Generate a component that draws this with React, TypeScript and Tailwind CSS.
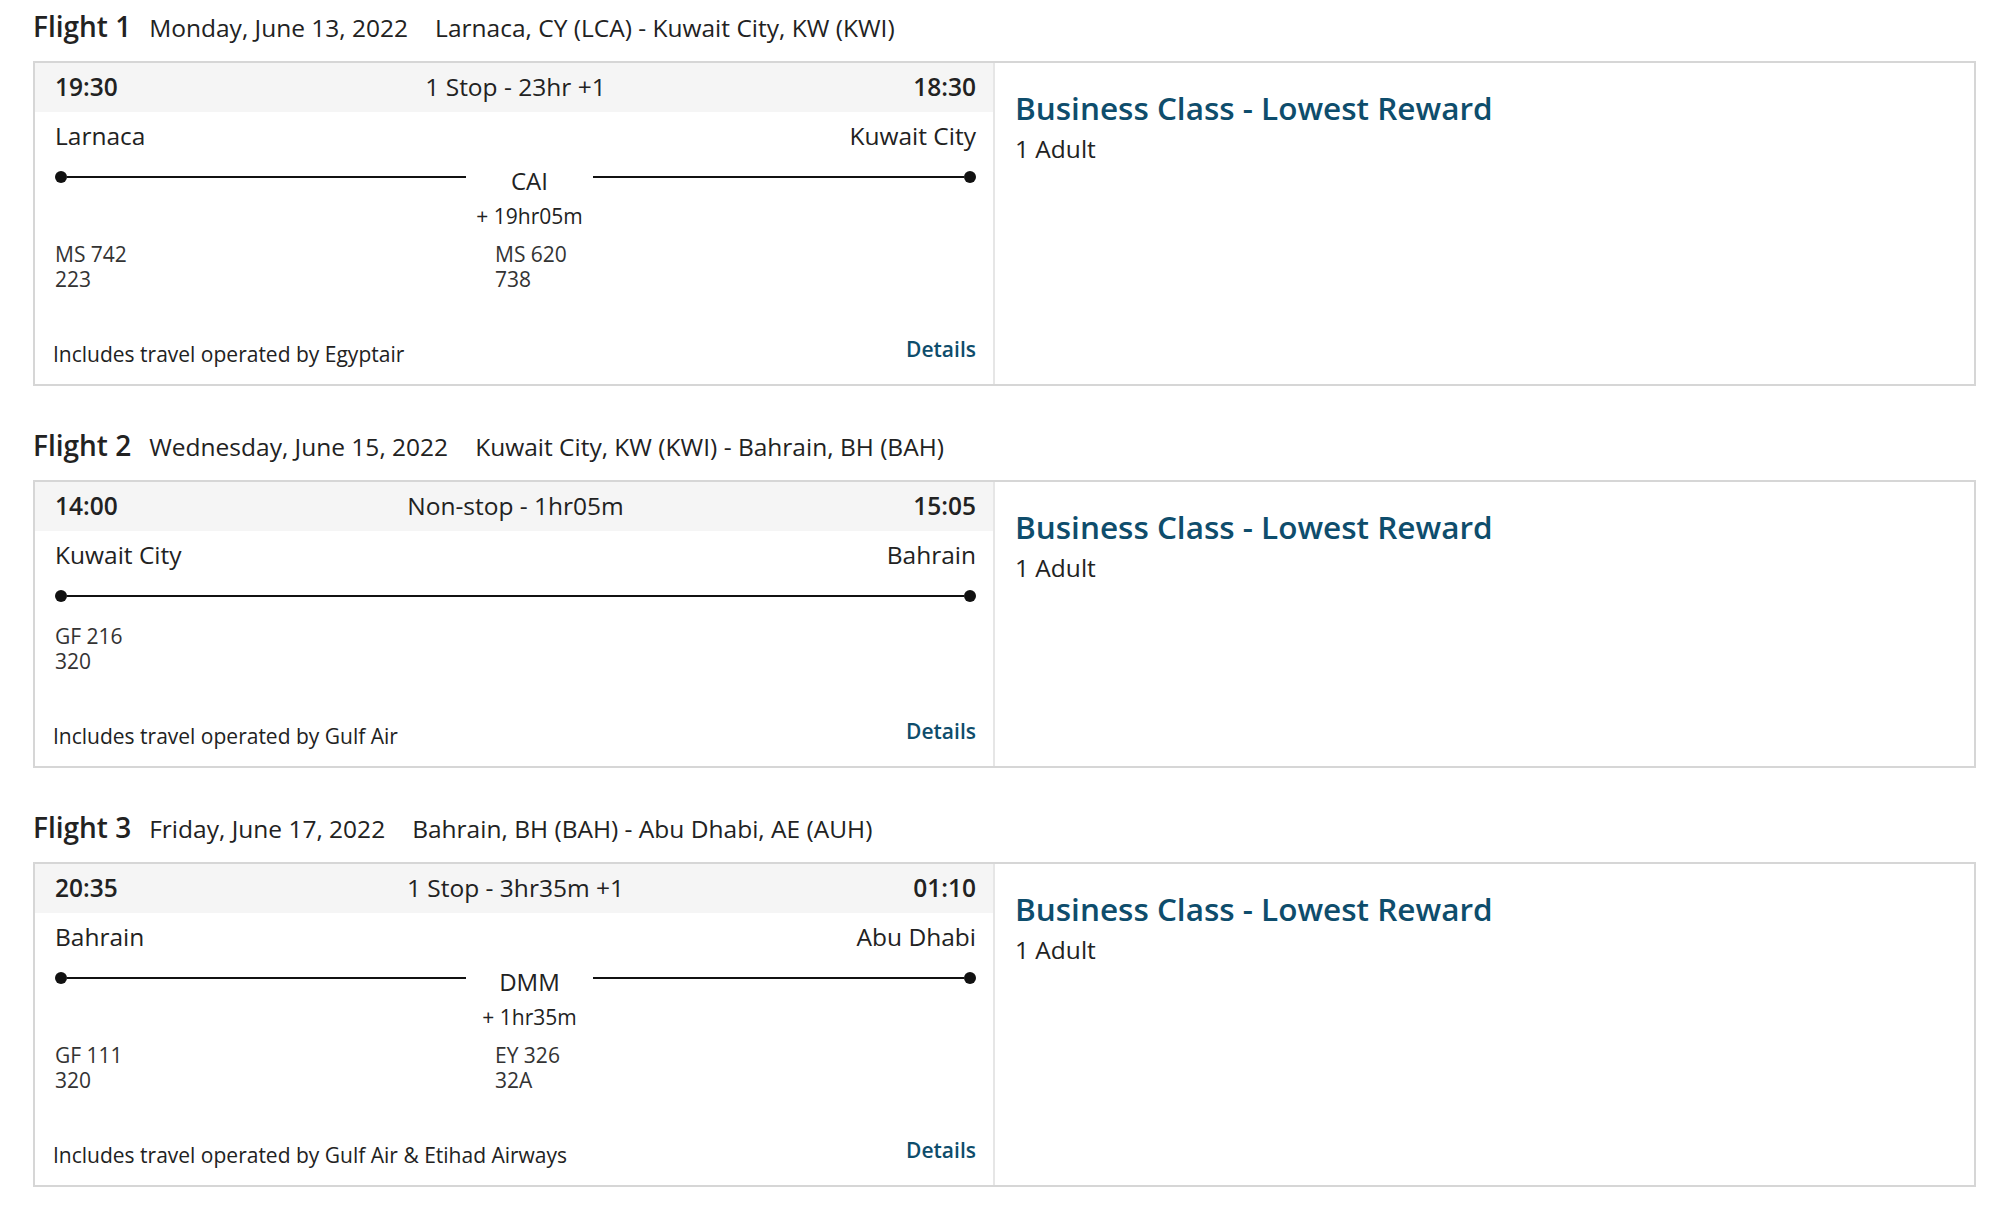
type Leg = {
  flightNo: string;
  aircraft: string;
};

type Flight = {
  num: number;
  date: string;
  route: string;
  depart: string;
  arrive: string;
  summary: string;
  from: string;
  to: string;
  stop?: { code: string; layover: string };
  legs: Leg[];
  operatedBy: string;
};

const flights: Flight[] = [
  {
    num: 1,
    date: "Monday, June 13, 2022",
    route: "Larnaca, CY (LCA) - Kuwait City, KW (KWI)",
    depart: "19:30",
    arrive: "18:30",
    summary: "1 Stop - 23hr +1",
    from: "Larnaca",
    to: "Kuwait City",
    stop: { code: "CAI", layover: "+ 19hr05m" },
    legs: [
      { flightNo: "MS 742", aircraft: "223" },
      { flightNo: "MS 620", aircraft: "738" },
    ],
    operatedBy: "Includes travel operated by Egyptair",
  },
  {
    num: 2,
    date: "Wednesday, June 15, 2022",
    route: "Kuwait City, KW (KWI) - Bahrain, BH (BAH)",
    depart: "14:00",
    arrive: "15:05",
    summary: "Non-stop - 1hr05m",
    from: "Kuwait City",
    to: "Bahrain",
    legs: [{ flightNo: "GF 216", aircraft: "320" }],
    operatedBy: "Includes travel operated by Gulf Air",
  },
  {
    num: 3,
    date: "Friday, June 17, 2022",
    route: "Bahrain, BH (BAH) - Abu Dhabi, AE (AUH)",
    depart: "20:35",
    arrive: "01:10",
    summary: "1 Stop - 3hr35m +1",
    from: "Bahrain",
    to: "Abu Dhabi",
    stop: { code: "DMM", layover: "+ 1hr35m" },
    legs: [
      { flightNo: "GF 111", aircraft: "320" },
      { flightNo: "EY 326", aircraft: "32A" },
    ],
    operatedBy: "Includes travel operated by Gulf Air & Etihad Airways",
  },
];

function Dot() {
  return <span className="size-3 shrink-0 rounded-full bg-[#111]" />;
}

function Timeline({ stop }: { stop?: Flight["stop"] }) {
  if (!stop) {
    return (
      <div className="mt-[13px] flex h-6 items-center">
        <Dot />
        <div className="h-[2px] flex-1 bg-[#111]" />
        <Dot />
      </div>
    );
  }

  return (
    <div className="mt-[13px] flex items-start">
      <div className="flex h-6 w-[411px] items-center">
        <Dot />
        <div className="h-[2px] flex-1 bg-[#111]" />
      </div>
      <div className="flex w-[127px] flex-col items-center">
        <span className="text-[24px] leading-8">{stop.code}</span>
        <span className="mt-[5px] text-[21px] leading-7">{stop.layover}</span>
      </div>
      <div className="flex h-6 flex-1 items-center">
        <div className="h-[2px] flex-1 bg-[#111]" />
        <Dot />
      </div>
    </div>
  );
}

function FlightCard({ flight }: { flight: Flight }) {
  return (
    <section>
      {/* Heading line */}
      <h2 className="flex items-baseline text-[24.5px] leading-9 text-[#222]">
        <span className="text-[28px] font-semibold">Flight {flight.num}</span>
        <span className="ml-[18px]">{flight.date}</span>
        <span className="ml-[27px]">{flight.route}</span>
      </h2>

      <div className="mt-[15px] grid grid-cols-[958px_1fr] border-2 border-[#d6d6d6]">
        <div className="pb-4 text-[#222]">
          <div className="flex h-[49px] items-center justify-between bg-[#f5f5f5] pr-[17px] pl-5 text-[24.5px]">
            <span className="font-semibold">{flight.depart}</span>
            <span>{flight.summary}</span>
            <span className="font-semibold">{flight.arrive}</span>
          </div>

          <div className="pr-[17px] pl-5">
            <div className="mt-2 flex justify-between text-[24.5px] leading-8">
              <span>{flight.from}</span>
              <span>{flight.to}</span>
            </div>

            <Timeline stop={flight.stop} />

            <div
              className={
                flight.stop
                  ? "mt-3 grid grid-cols-[440px_1fr] text-[21px] leading-[25px] text-[#333]"
                  : "mt-4 grid grid-cols-[440px_1fr] text-[21px] leading-[25px] text-[#333]"
              }
            >
              {flight.legs.map((leg) => (
                <div key={leg.flightNo} className="flex flex-col">
                  <span>{leg.flightNo}</span>
                  <span>{leg.aircraft}</span>
                </div>
              ))}
            </div>

            <div className="mt-[43px] flex items-start justify-between text-[21px] leading-7">
              <span className="-ml-[2px] mt-[5px] text-[#222]">{flight.operatedBy}</span>
              <a className="font-semibold text-[#0e4d6c]">Details</a>
            </div>
          </div>
        </div>

        {/* Fare column */}
        <div className="border-l-2 border-[#e6e6e6] pt-[25px] pl-5">
          <div className="text-[31.5px] leading-10 font-semibold text-[#0e4d6c]">
            Business Class - Lowest Reward
          </div>
          <div className="mt-[5px] text-[24.5px] leading-8 text-[#222]">1 Adult</div>
        </div>
      </div>
    </section>
  );
}

export default function App() {
  return (
    <div className="min-h-screen bg-white pt-[8px] pr-[24px] pb-8 pl-[33px] font-['Open_Sans',sans-serif]">
      <div className="flex flex-col gap-[41px]">
        {flights.map((f) => (
          <FlightCard key={f.num} flight={f} />
        ))}
      </div>
    </div>
  );
}
